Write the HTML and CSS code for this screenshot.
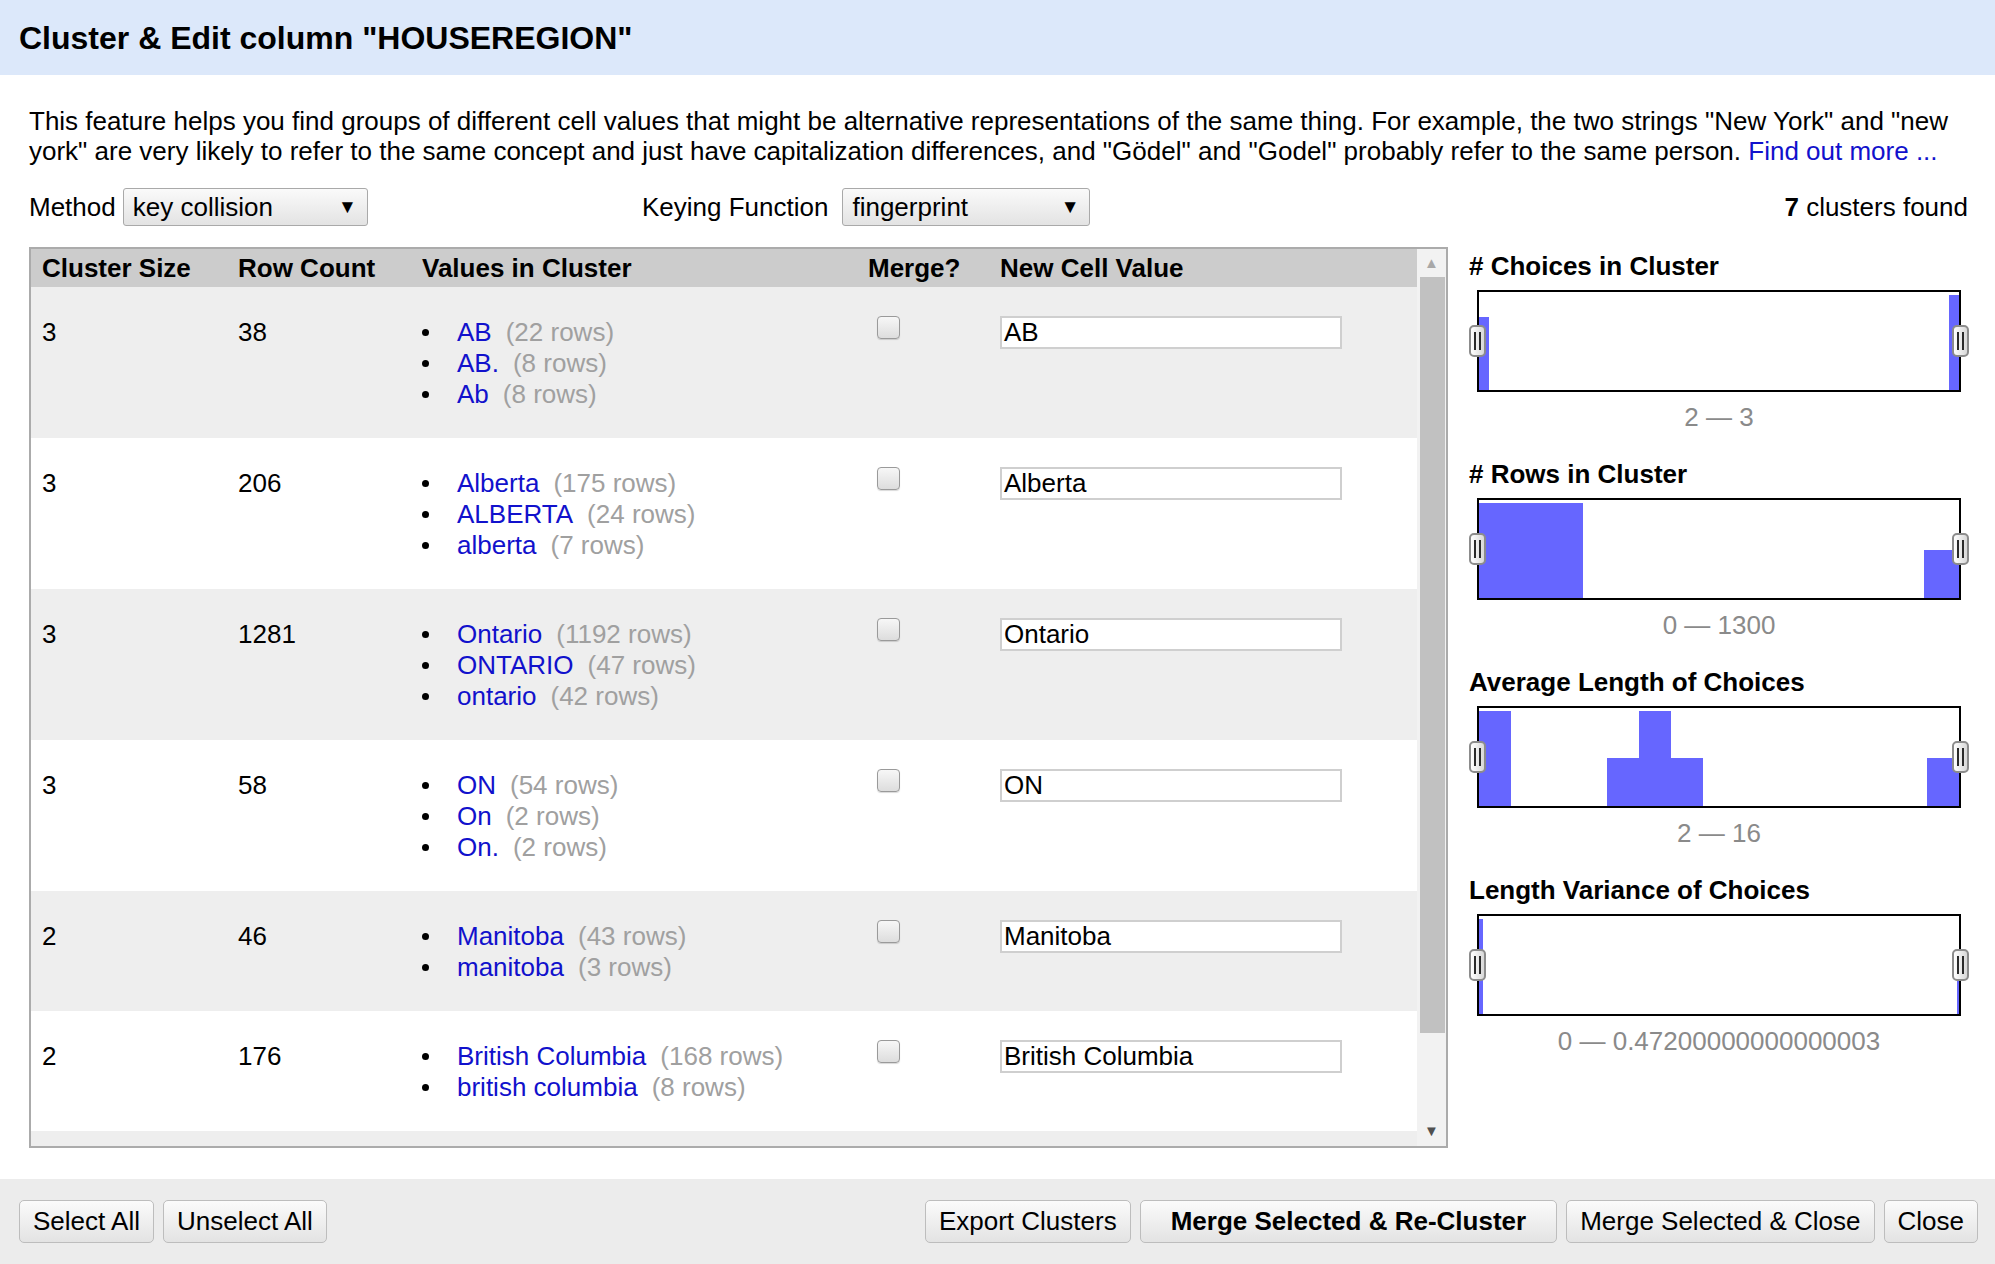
FILE: index.html
```html
<!DOCTYPE html>
<html lang="en">
<head>
<meta charset="utf-8">
<title>Cluster &amp; Edit column</title>
<link rel="stylesheet" href="styles.css">
</head>
<body>
<div class="dialog">
  <div class="dlg-header"><h1>Cluster &amp; Edit column "HOUSEREGION"</h1></div>
  <div class="dlg-body">
    <p class="desc">This feature helps you find groups of different cell values that might be alternative representations of the same thing. For example, the two strings "New York" and "new<br>york" are very likely to refer to the same concept and just have capitalization differences, and "Gödel" and "Godel" probably refer to the same person. <a class="link" href="#">Find out more ...</a></p>
    <div class="controls">
      <div class="ctl">
        <span class="ctl-label">Method</span>
        <div class="select sel-method"><span>key collision</span><span class="arrow">▼</span></div>
      </div>
      <div class="ctl">
        <span class="ctl-label key">Keying Function</span>
        <div class="select sel-key"><span>fingerprint</span><span class="arrow">▼</span></div>
      </div>
      <div class="found"><b>7</b> clusters found</div>
    </div>
    <div class="main">
      <div class="table-box">
        <div class="table-scroll">
          <div class="trow thead">
            <div class="cell">Cluster Size</div>
            <div class="cell">Row Count</div>
            <div class="cell">Values in Cluster</div>
            <div class="cell">Merge?</div>
            <div class="cell">New Cell Value</div>
          </div>
          <div class="trow odd">
            <div class="cell">3</div>
            <div class="cell">38</div>
            <div class="cell"><ul class="vals">
              <li><a class="link" href="#">AB</a><span class="cnt">(22 rows)</span></li>
              <li><a class="link" href="#">AB.</a><span class="cnt">(8 rows)</span></li>
              <li><a class="link" href="#">Ab</a><span class="cnt">(8 rows)</span></li>
            </ul></div>
            <div class="cell cb-cell"><span class="checkbox"></span></div>
            <div class="cell"><div class="input">AB</div></div>
          </div>
          <div class="trow even">
            <div class="cell">3</div>
            <div class="cell">206</div>
            <div class="cell"><ul class="vals">
              <li><a class="link" href="#">Alberta</a><span class="cnt">(175 rows)</span></li>
              <li><a class="link" href="#">ALBERTA</a><span class="cnt">(24 rows)</span></li>
              <li><a class="link" href="#">alberta</a><span class="cnt">(7 rows)</span></li>
            </ul></div>
            <div class="cell cb-cell"><span class="checkbox"></span></div>
            <div class="cell"><div class="input">Alberta</div></div>
          </div>
          <div class="trow odd">
            <div class="cell">3</div>
            <div class="cell">1281</div>
            <div class="cell"><ul class="vals">
              <li><a class="link" href="#">Ontario</a><span class="cnt">(1192 rows)</span></li>
              <li><a class="link" href="#">ONTARIO</a><span class="cnt">(47 rows)</span></li>
              <li><a class="link" href="#">ontario</a><span class="cnt">(42 rows)</span></li>
            </ul></div>
            <div class="cell cb-cell"><span class="checkbox"></span></div>
            <div class="cell"><div class="input">Ontario</div></div>
          </div>
          <div class="trow even">
            <div class="cell">3</div>
            <div class="cell">58</div>
            <div class="cell"><ul class="vals">
              <li><a class="link" href="#">ON</a><span class="cnt">(54 rows)</span></li>
              <li><a class="link" href="#">On</a><span class="cnt">(2 rows)</span></li>
              <li><a class="link" href="#">On.</a><span class="cnt">(2 rows)</span></li>
            </ul></div>
            <div class="cell cb-cell"><span class="checkbox"></span></div>
            <div class="cell"><div class="input">ON</div></div>
          </div>
          <div class="trow odd">
            <div class="cell">2</div>
            <div class="cell">46</div>
            <div class="cell"><ul class="vals">
              <li><a class="link" href="#">Manitoba</a><span class="cnt">(43 rows)</span></li>
              <li><a class="link" href="#">manitoba</a><span class="cnt">(3 rows)</span></li>
            </ul></div>
            <div class="cell cb-cell"><span class="checkbox"></span></div>
            <div class="cell"><div class="input">Manitoba</div></div>
          </div>
          <div class="trow even">
            <div class="cell">2</div>
            <div class="cell">176</div>
            <div class="cell"><ul class="vals">
              <li><a class="link" href="#">British Columbia</a><span class="cnt">(168 rows)</span></li>
              <li><a class="link" href="#">british columbia</a><span class="cnt">(8 rows)</span></li>
            </ul></div>
            <div class="cell cb-cell"><span class="checkbox"></span></div>
            <div class="cell"><div class="input">British Columbia</div></div>
          </div>
          <div class="trow odd empty"></div>
        </div>
        <div class="scrollbar">
          <div class="sb-btn up">▲</div>
          <div class="thumb"></div>
          <div class="sb-space"></div>
          <div class="sb-btn down">▼</div>
        </div>
      </div>

      <div class="facets">
        <div class="facet">
          <h3># Choices in Cluster</h3>
          <div class="chart-wrap">
            <div class="chart">
              <svg width="480" height="98" viewBox="0 0 480 98">
                <rect x="0" y="25" width="10" height="73" fill="#6666ff"/>
                <rect x="470" y="3" width="10" height="95" fill="#6666ff"/>
              </svg>
            </div>
            <span class="handle h-left"></span>
            <span class="handle h-right"></span>
          </div>
          <div class="range">2 — 3</div>
        </div>
        <div class="facet">
          <h3># Rows in Cluster</h3>
          <div class="chart-wrap">
            <div class="chart">
              <svg width="480" height="98" viewBox="0 0 480 98">
                <rect x="0" y="3" width="104" height="95" fill="#6666ff"/>
                <rect x="445" y="50" width="35" height="48" fill="#6666ff"/>
              </svg>
            </div>
            <span class="handle h-left"></span>
            <span class="handle h-right"></span>
          </div>
          <div class="range">0 — 1300</div>
        </div>
        <div class="facet">
          <h3>Average Length of Choices</h3>
          <div class="chart-wrap">
            <div class="chart">
              <svg width="480" height="98" viewBox="0 0 480 98">
                <rect x="0" y="3" width="32" height="95" fill="#6666ff"/>
                <rect x="128" y="50" width="32" height="48" fill="#6666ff"/>
                <rect x="160" y="3" width="32" height="95" fill="#6666ff"/>
                <rect x="192" y="50" width="32" height="48" fill="#6666ff"/>
                <rect x="448" y="50" width="32" height="48" fill="#6666ff"/>
              </svg>
            </div>
            <span class="handle h-left"></span>
            <span class="handle h-right"></span>
          </div>
          <div class="range">2 — 16</div>
        </div>
        <div class="facet">
          <h3>Length Variance of Choices</h3>
          <div class="chart-wrap">
            <div class="chart">
              <svg width="480" height="98" viewBox="0 0 480 98">
                <rect x="0" y="3" width="4" height="95" fill="#6666ff"/>
                <rect x="478" y="62" width="2" height="36" fill="#6666ff"/>
              </svg>
            </div>
            <span class="handle h-left"></span>
            <span class="handle h-right"></span>
          </div>
          <div class="range">0 — 0.47200000000000003</div>
        </div>
      </div>
    </div>
  </div>
  <div class="dlg-footer">
    <div class="btn-group">
      <button class="btn">Select All</button>
      <button class="btn">Unselect All</button>
    </div>
    <div class="btn-group">
      <button class="btn">Export Clusters</button>
      <button class="btn btn-primary">Merge Selected &amp; Re-Cluster</button>
      <button class="btn">Merge Selected &amp; Close</button>
      <button class="btn">Close</button>
    </div>
  </div>
</div>
</body>
</html>
```

FILE: styles.css
```css
html, body {
  margin: 0;
  padding: 0;
  background: #ffffff;
}

body {
  font-family: "Liberation Sans", Arial, Helvetica, sans-serif;
  font-size: 26px;
  color: #000000;
}

.dialog {
  width: 1995px;
  height: 1264px;
  display: flex;
  flex-direction: column;
  overflow: hidden;
}

/* Header */
.dlg-header {
  height: 75px;
  flex: 0 0 75px;
  background: #dce8fa;
  display: flex;
  align-items: center;
  padding-left: 19px;
}

.dlg-header h1 {
  margin: 0;
  font-size: 32px;
  font-weight: bold;
  line-height: 36px;
}

/* Body */
.dlg-body {
  flex: 1 1 auto;
  padding: 0 27px 0 29px;
}

.desc {
  margin: 0;
  padding-top: 31px;
  line-height: 30px;
}

.link {
  color: #1111cc;
  text-decoration: none;
}

.controls {
  margin-top: 22px;
  height: 38px;
  display: grid;
  grid-template-columns: 613px 1fr auto;
  align-items: center;
}

.ctl {
  display: flex;
  align-items: center;
}

.ctl-label {
  margin-right: 7px;
}

.ctl-label.key {
  margin-right: 14px;
}

.select {
  box-sizing: border-box;
  height: 38px;
  display: flex;
  align-items: center;
  justify-content: space-between;
  padding: 0 10px 0 9px;
  border: 1px solid #a9a9a9;
  border-radius: 3px;
  background: linear-gradient(#fafafa, #e3e3e3);
}

.sel-method {
  width: 245px;
}

.sel-key {
  width: 248px;
}

.select .arrow {
  font-size: 19px;
  line-height: 20px;
  color: #000;
}

.found {
  text-align: right;
}

/* Main area */
.main {
  margin-top: 21px;
  height: 901px;
  display: grid;
  grid-template-columns: 1419px 1fr;
  column-gap: 21px;
}

.table-box {
  box-sizing: border-box;
  height: 901px;
  border: 2px solid #ababab;
  display: flex;
  overflow: hidden;
}

.table-scroll {
  flex: 1 1 auto;
  overflow: hidden;
}

.trow {
  display: grid;
  grid-template-columns: 196px 184px 446px 132px 1fr;
}

.cell {
  padding-left: 11px;
}

.thead {
  height: 38px;
  background: #cccccc;
  font-weight: bold;
  align-items: center;
}

.odd {
  background: #eeeeee;
}

.even {
  background: #ffffff;
}

.trow.odd:not(.thead),
.trow.even {
  padding: 30px 0 28px;
  line-height: 31px;
  align-items: start;
}

.trow.empty {
  height: 62px;
}

.vals {
  margin: 0;
  padding: 0;
  list-style: none;
}

.vals li {
  display: flex;
  align-items: center;
  white-space: nowrap;
}

.vals li::before {
  content: "";
  width: 7px;
  height: 7px;
  border-radius: 50%;
  background: #000;
  margin-right: 28px;
  flex: 0 0 auto;
}

.cnt {
  color: #a0a0a0;
  margin-left: 14px;
}

.cb-cell {
  padding-left: 20px;
}

.checkbox {
  display: block;
  box-sizing: border-box;
  width: 23px;
  height: 23px;
  margin-top: -1px;
  border: 1.5px solid #9a9a9a;
  border-radius: 4px;
  background: linear-gradient(#f7f7f7, #dddddd);
  box-shadow: 0 1px 1px rgba(0,0,0,0.15);
}

.input {
  box-sizing: border-box;
  width: 342px;
  height: 33px;
  margin-top: -1px;
  border: 2px solid #cfcfcf;
  background: #ffffff;
  padding-left: 2px;
  line-height: 29px;
  white-space: nowrap;
  overflow: hidden;
}

/* Fake scrollbar */
.scrollbar {
  flex: 0 0 29px;
  width: 29px;
  background: #f2f2f2;
  display: flex;
  flex-direction: column;
}

.sb-btn {
  display: flex;
  align-items: center;
  justify-content: center;
  font-size: 15px;
  line-height: 16px;
}

.sb-btn.up {
  height: 28px;
  color: #a8a8a8;
}

.thumb {
  height: 756px;
  margin: 0 1px 0 3px;
  background: #c1c1c1;
}

.sb-space {
  flex: 1 1 auto;
}

.sb-btn.down {
  height: 31px;
  color: #505050;
}

/* Facets */
.facets {
  padding-top: 4px;
}

.facet + .facet {
  margin-top: 27px;
}

.facet h3 {
  margin: 0;
  font-size: 26px;
  font-weight: bold;
  line-height: 30px;
}

.chart-wrap {
  position: relative;
  width: 484px;
  height: 102px;
  margin: 9px 0 0 8px;
}

.chart {
  box-sizing: border-box;
  width: 484px;
  height: 102px;
  border: 2px solid #000000;
  background: #ffffff;
}

.chart svg {
  display: block;
}

.handle {
  position: absolute;
  top: 35px;
  box-sizing: border-box;
  width: 17px;
  height: 32px;
  border: 2px solid #8c8c8c;
  border-radius: 5px;
  background: linear-gradient(to right, #ffffff, #d8d8d8);
}

.handle::after {
  content: "";
  position: absolute;
  left: 3px;
  top: 5px;
  width: 3px;
  height: 18px;
  border-left: 2px solid #2a2a2a;
  border-right: 2px solid #2a2a2a;
}

.h-left {
  left: -8px;
}

.h-right {
  right: -8px;
}

.range {
  width: 484px;
  margin: 10px 0 0 8px;
  text-align: center;
  color: #8a8a8a;
  line-height: 30px;
}

/* Footer */
.dlg-footer {
  flex: 0 0 85px;
  height: 85px;
  box-sizing: border-box;
  margin-top: 31px;
  padding: 21px 17px 0 19px;
  background: #ececec;
  display: flex;
  justify-content: space-between;
  align-items: flex-start;
}

.btn-group {
  display: flex;
  gap: 9px;
}

.btn {
  box-sizing: border-box;
  height: 43px;
  padding: 0 13px;
  font-family: "Liberation Sans", Arial, Helvetica, sans-serif;
  font-size: 26px;
  color: #000;
  border: 1px solid #bdbdbd;
  border-radius: 5px;
  background: linear-gradient(#fbfbfb, #e3e3e3);
  white-space: nowrap;
}

.btn-primary {
  font-weight: bold;
  padding: 0 30px;
}
```
